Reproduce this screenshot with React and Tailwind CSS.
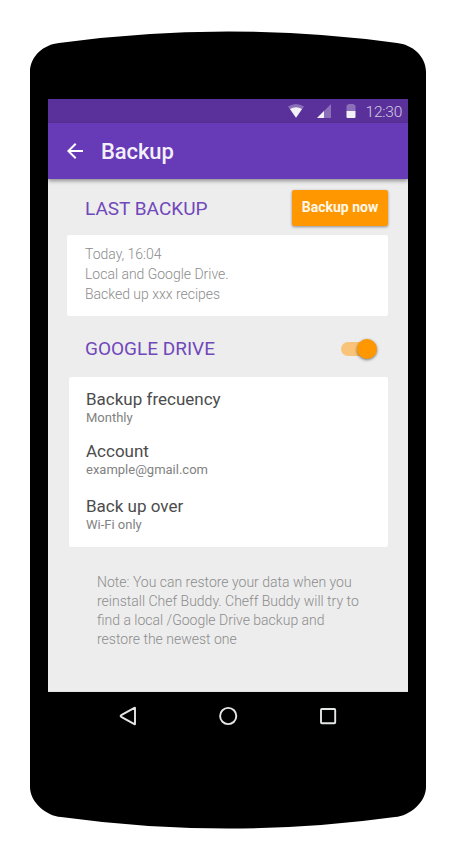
function DeviceBody() {
  return (
    <svg className="absolute inset-0" width="456" height="859" viewBox="0 0 456 859">
      <path d="M30 72C30 56 44 44.500 59 43Q142 31.500 228 31.500T397 43C412 44.500 426 56 426 72V787C426 802 410 816 395 817Q312 828.500 228 828.500T61 817C46 816 30 802 30 787Z" fill="#000" />
    </svg>
  );
}

function StatusBar() {
  return (
    <div className="flex h-6 items-center bg-[#5a319a] pl-[240px]">
      <svg width="72" height="24" viewBox="0 0 72 24" className="shrink-0">
        <path d="M0 7.500Q8 2.500 16 7.500L8 18.800Z" fill="#fff" opacity=".3" />
        <path d="M2 10Q8 6.300 14 10L8 18.800Z" fill="#f4f0f8" />
        <path d="M29 19L43 5V19Z" fill="#fff" opacity=".3" />
        <path d="M29 19L36 12V19Z" fill="#f4f0f8" />
        <path d="M58.500 7Q58.500 6 59.500 6L60.500 5H65.500L66.500 6Q67.500 6 67.500 7V12H58.500Z" fill="#fff" opacity=".3" />
        <path d="M58.500 12H67.500V18Q67.500 19 66.500 19H59.500Q58.500 19 58.500 18Z" fill="#f4f0f8" />
      </svg>
      <span className="ml-[5.500px] pt-[2px] text-[15.500px] font-light leading-6 tracking-[-0.2px] text-[#d5cae4]">12:30</span>
    </div>
  );
}

function AppBar() {
  return (
    <div className="relative flex h-14 items-center bg-[#673ab7] pl-[15px] shadow-[0_2px_4px_rgba(0,0,0,0.4)]">
      <svg width="24" height="24" viewBox="0 0 24 24" fill="#fff">
        <path d="M20 11H7.830l5.590-5.590L12 4l-8 8 8 8 1.410-1.410L7.830 13H20v-2z" />
      </svg>
      <h1 className="ml-[14px] pt-[2px] text-[22px] font-medium leading-7 tracking-[-0.1px] text-[#f4f0fa]">Backup</h1>
    </div>
  );
}

function Switch() {
  return (
    <button className="relative mr-[11px] h-5 w-9" aria-label="Google Drive backup">
      <span className="absolute left-0 top-[3px] h-[14px] w-[34px] rounded-full bg-[#f9c479]" />
      <span className="absolute right-0 top-0 size-5 rounded-full bg-[#ff9800] shadow-[0_1px_3px_rgba(0,0,0,0.5)]" />
    </button>
  );
}

const settings = [
  { title: "Backup frecuency", value: "Monthly", height: "h-[52px]" },
  { title: "Account", value: "example@gmail.com", height: "h-[55px]" },
  { title: "Back up over", value: "Wi-Fi only", height: "h-10" },
];

function NavBar() {
  return (
    <div className="flex h-12 items-center justify-center gap-[76px]">
      <svg width="24" height="24" viewBox="0 0 24 24" fill="none" stroke="#e4e7e6" strokeWidth="1.900" strokeLinejoin="round">
        <path d="M19 4.300V19.700Q19.200 20.500 18.400 20.100L5.200 12.800Q4 12 5.200 11.200L18.400 3.900Q19.200 3.500 19 4.300Z" />
      </svg>
      <svg width="24" height="24" viewBox="0 0 24 24" fill="none" stroke="#e4e7e6" strokeWidth="1.900">
        <circle cx="12.200" cy="12" r="8.100" />
      </svg>
      <svg width="24" height="24" viewBox="0 0 24 24" fill="none" stroke="#e4e7e6" strokeWidth="1.900">
        <rect x="5" y="5" width="14.200" height="14.200" rx="0.900" />
      </svg>
    </div>
  );
}

export default function App() {
  return (
    <div className="relative h-[859px] w-[456px] overflow-hidden bg-white px-12 pt-[99px] font-['Roboto',sans-serif]">
      <DeviceBody />
      <main className="relative w-[360px]">
        <StatusBar />
        <AppBar />
        <section className="h-[513px] border-b border-[#dfe4e2] bg-[#ededed] pl-[19px] pr-5">
          <div className="flex h-14 items-center justify-between pb-[9px] pt-[11px] pl-[18px]">
            <h2 className="pt-[2px] text-[19px] leading-6 text-[#7048bb]">LAST BACKUP</h2>
            <button className="h-9 w-24 rounded-[2px] bg-[#ff9800] pb-[2px] text-[14px] font-bold text-[#fff8ec] shadow-[0_1px_3px_rgba(0,0,0,0.4)]">Backup now</button>
          </div>
          <div className="h-[81px] rounded-[2px] bg-white pl-[18px] pt-[9px] text-[14px] font-light leading-5 tracking-[-0.02px] text-[#8c8c8c]">
            <p>Today, 16:04</p>
            <p>Local and Google Drive.</p>
            <p>Backed up xxx recipes</p>
          </div>
          <div className="flex h-[61px] items-center justify-between pl-[18px] pt-[5px]">
            <h2 className="text-[19px] leading-6 text-[#7048bb]">GOOGLE DRIVE</h2>
            <Switch />
          </div>
          <div className="ml-[2px] h-[170px] rounded-[2px] bg-white pl-[17px] pt-[12px]">
            {settings.map((s) => (
              <div key={s.title} className={s.height}>
                <p className="text-[17px] leading-5 text-[#4c4c4c]">{s.title}</p>
                <p className="text-[13px] leading-[17px] text-[#828282]">{s.value}</p>
              </div>
            ))}
          </div>
          <p className="whitespace-nowrap pl-[30px] pt-[26px] text-[14px] font-light leading-[19px] text-[#8c8c8c]">
            Note: You can restore your data when you<br />
            reinstall Chef Buddy. Cheff Buddy will try to<br />
            find a local /Google Drive backup and<br />
            restore the newest one
          </p>
        </section>
        <NavBar />
      </main>
    </div>
  );
}
